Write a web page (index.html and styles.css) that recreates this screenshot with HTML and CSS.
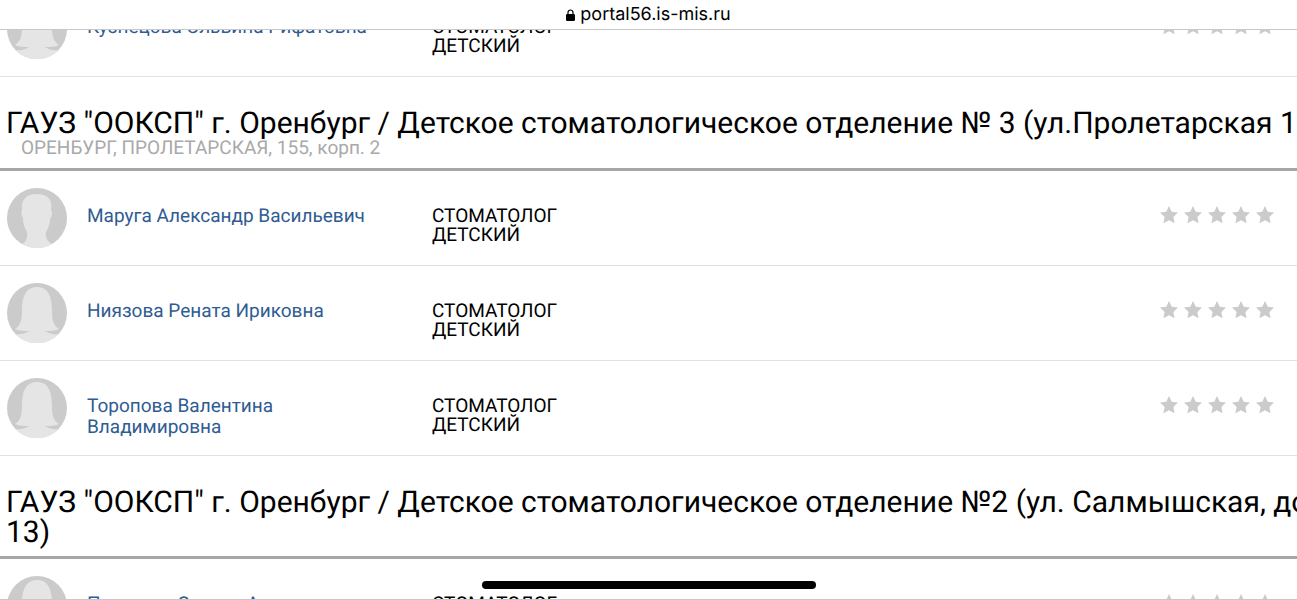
FILE: index.html
```html
<!DOCTYPE html>
<html lang="ru">
<head>
    <meta charset="UTF-8">
    <meta name="viewport" content="width=device-width, initial-scale=1.0">
    <title>portal56.is-mis.ru</title>
    <link rel="stylesheet" href="styles.css">
</head>
<body>
    <svg class="symbols" aria-hidden="true">
        <symbol id="man" viewBox="0 0 60 60">
            <circle cx="30" cy="30" r="30" fill="#cbcbcb"/>
            <path d="M15 56C19 54 21 50 20 44C17 39 16 35 16 30C14 27 14 24 15 22C14 11 20 6 30 6C40 6 46 11 44 22C46 25 45 28 43 31C43 36 41 41 39 44C38 50 41 54 45 56A30 30 0 0 1 15 56Z" fill="#e5e5e5"/>
        </symbol>
        <symbol id="woman" viewBox="0 0 60 60">
            <circle cx="30" cy="30" r="30" fill="#cbcbcb"/>
            <path d="M8 46C14 42 15 36 15 28C15 13 19 4 30 4C41 4 45 13 45 28C45 36 46 42 52 46C48 48 43 48 38 48C41 50 46 52 52 51A30 30 0 0 1 8 51C14 52 19 50 22 48C17 48 12 48 8 46Z" fill="#e5e5e5"/>
        </symbol>
        <symbol id="stars" viewBox="0 0 114 18">
            <g fill="#cbcbcb">
                <path id="star" d="M9 0L11.700 5.800L18 6.600L13.400 11L14.600 17.200L9 14.200L3.400 17.200L4.600 11L0 6.600L6.300 5.800Z"/>
                <use href="#star" x="24"/>
                <use href="#star" x="48"/>
                <use href="#star" x="72"/>
                <use href="#star" x="96"/>
            </g>
        </symbol>
    </svg>

    <header class="address-bar">
        <svg class="lock" viewBox="0 0 9 12" aria-hidden="true">
            <path d="M2 6V3.500a2.500 2.500 0 0 1 5 0V6" fill="none" stroke="#000" stroke-width="1.200"/>
            <rect x="0" y="5" width="9" height="7" rx="1.300"/>
        </svg>
        <span>portal56.is-mis.ru</span>
    </header>

    <main class="page">
        <div class="list">
            <div class="doctor">
                <svg class="avatar"><use href="#woman"/></svg>
                <a class="name" href="#">Кузнецова Эльвина Рифатовна</a>
                <div class="post">СТОМАТОЛОГ ДЕТСКИЙ</div>
                <svg class="rating"><use href="#stars"/></svg>
            </div>

            <div class="department">
                <h2>ГАУЗ "ООКСП" г. Оренбург / Детское стоматологическое отделение № 3 (ул.Пролетарская 155)</h2>
                <p>ОРЕНБУРГ, ПРОЛЕТАРСКАЯ, 155, корп. 2</p>
            </div>
            <div class="doctor">
                <svg class="avatar"><use href="#man"/></svg>
                <a class="name" href="#">Маруга Александр Васильевич</a>
                <div class="post">СТОМАТОЛОГ ДЕТСКИЙ</div>
                <svg class="rating"><use href="#stars"/></svg>
            </div>
            <div class="doctor">
                <svg class="avatar"><use href="#woman"/></svg>
                <a class="name" href="#">Ниязова Рената Ириковна</a>
                <div class="post">СТОМАТОЛОГ ДЕТСКИЙ</div>
                <svg class="rating"><use href="#stars"/></svg>
            </div>
            <div class="doctor">
                <svg class="avatar"><use href="#woman"/></svg>
                <a class="name" href="#">Торопова Валентина Владимировна</a>
                <div class="post">СТОМАТОЛОГ ДЕТСКИЙ</div>
                <svg class="rating"><use href="#stars"/></svg>
            </div>

            <div class="department">
                <h2>ГАУЗ "ООКСП" г. Оренбург / Детское стоматологическое отделение №2 (ул. Салмышская, дом 13)</h2>
            </div>
            <div class="doctor">
                <svg class="avatar"><use href="#woman"/></svg>
                <a class="name" href="#">Пахарева Оксана Александровна</a>
                <div class="post">СТОМАТОЛОГ ДЕТСКИЙ</div>
                <svg class="rating"><use href="#stars"/></svg>
            </div>
        </div>
    </main>
    <div class="home-indicator"></div>
</body>
</html>
```
FILE: styles.css
```css
* {
    box-sizing: border-box;
}
body {
    margin: 0;
    height: 100vh;
    display: flex;
    flex-direction: column;
    overflow: hidden;
    background-color: #fff;
    color: #000;
    font-family: Roboto, sans-serif;
    font-size: 19px;
    text-rendering: geometricPrecision;
}
.symbols {
    display: none;
}
.address-bar {
    flex: none;
    display: flex;
    justify-content: center;
    align-items: center;
    gap: 5px;
    height: 30px;
    border-bottom: 1px solid #c8c8c8;
    font-family: Inter, sans-serif;
    font-size: 18px;
}
.lock {
    width: 9px;
    height: 12px;
}
.page {
    flex: 1;
    min-height: 0;
    overflow: hidden;
    border-bottom: 1px solid #c8c8c8;
}
/* the list is wider than the screen and scrolled down a little */
.list {
    width: calc(100% + 60px);
    margin-top: -48px;
}
.doctor {
    display: grid;
    grid-template-columns: 60px 320px 160px 1fr;
    column-gap: 20px;
    align-items: start;
    height: 95px;
    padding: 17px 83px 0 7px;
    border-bottom: 1px solid #e2e2e2;
}
.avatar {
    width: 60px;
    height: 60px;
}
.name {
    max-width: 310px;
    padding-top: 17px;
    line-height: 21px;
    color: #2f5c92;
    text-decoration: none;
}
.post {
    width: 140px;
    margin-left: 5px;
    padding-top: 18px;
    line-height: 19px;
}
.rating {
    justify-self: end;
    width: 114px;
    height: 18px;
    margin-top: 18px;
}
.department {
    padding: 32px 6px 8px;
    border-bottom: 3px solid #a6a6a6;
}
.department h2 {
    margin: 0;
    font-size: 30px;
    font-weight: 400;
    line-height: 30px;
}
.department p {
    margin: 0;
    padding: 0 15px 3px;
    color: #a9a9a9;
    line-height: 18px;
}
.home-indicator {
    position: absolute;
    bottom: 11px;
    left: 50%;
    width: 334px;
    height: 8px;
    margin-left: -167px;
    border-radius: 4px;
    background-color: #000;
}
```
